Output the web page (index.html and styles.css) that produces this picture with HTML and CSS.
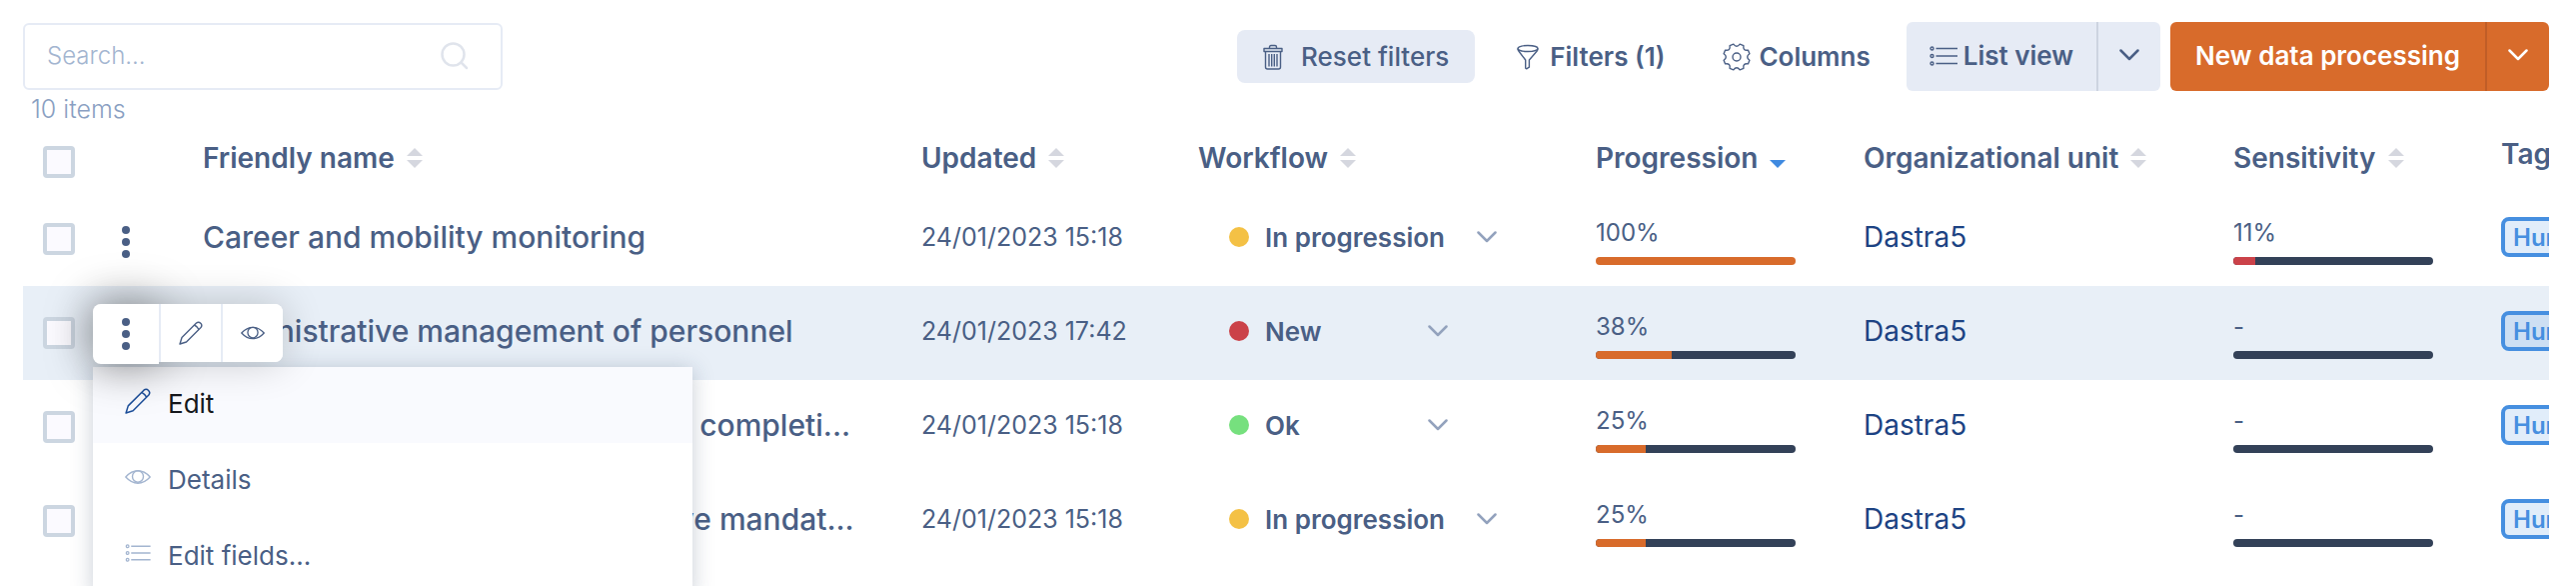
FILE: index.html
```html
<!DOCTYPE html>
<html lang="en">
<head>
<meta charset="utf-8">
<title>Data processing register</title>
<link rel="stylesheet" href="styles.css">
</head>
<body>
<svg class="sprite" aria-hidden="true">
  <symbol id="i-pencil" viewBox="0 0 24 24"><path d="M1 23L3 16.500L17.500 2A3.200 3.200 0 0 1 22 6.500L7.500 21zM15.500 4Q18.500 5.500 20 8.500"/></symbol>
  <symbol id="i-eye" viewBox="0 0 26 14"><path d="M.8 7Q6.500.8 13 .8T25.200 7Q19.500 13.200 13 13.200T.8 7z"/><ellipse cx="13" cy="6.500" rx="5.500" ry="5.700"/></symbol>
  <symbol id="i-list" viewBox="0 0 28 20"><circle cx="2.500" cy="2.500" r="1.500"/><circle cx="2.500" cy="10" r="1.500"/><circle cx="2.500" cy="17.500" r="1.500"/><path d="M6.500 2.500H28M6.500 10H28M6.500 17.500H28"/></symbol>
  <symbol id="i-chevron" viewBox="0 0 20 12"><path d="M1.500 1.500L10 10l8.500-8.500"/></symbol>
  <symbol id="i-sort" viewBox="0 0 16 20"><path d="M8 0l8 8H0zM8 20l8-8H0z"/></symbol>
  <symbol id="i-sort-down" viewBox="0 0 16 20"><path d="M8 20l8-8H0z"/></symbol>
  <symbol id="i-dots" viewBox="0 0 8 32"><circle cx="4" cy="4" r="4"/><circle cx="4" cy="16" r="4"/><circle cx="4" cy="28" r="4"/></symbol>
</svg>

<main class="page">
  <header class="toolbar">
    <label class="search">
      <input type="search" placeholder="Search..." aria-label="Search">
      <svg class="search-icon" viewBox="0 0 28 28"><circle cx="12.500" cy="12.500" r="11"/><path d="M20.500 20.500L26 26"/></svg>
    </label>
    <div class="actions">
      <button class="btn btn-reset">
        <svg class="icon" width="20" height="26" viewBox="0 0 20 26"><path d="M1 4.500h18v3H1zM6.500 4.500V3q0-1.500 1.500-1.500h4q1.500 0 1.500 1.500v1.500M2.500 7.500V23q0 2 2 2h11q2 0 2-2V7.500M6 10v12.500M8.700 10v12.500M11.300 10v12.500M14 10v12.500"/></svg>
        Reset filters
      </button>
      <button class="btn btn-filters">
        <svg class="icon" width="22" height="26" viewBox="0 0 22 26"><ellipse cx="11" cy="4.500" rx="10" ry="3"/><path d="M1 4.500q0 1.500 1 2.800L8.700 16v7.500q0 1.500 1.300 1.200l2.400-1.500V16L20 7.300q1-1.300 1-2.800"/></svg>
        Filters (1)
      </button>
      <button class="btn btn-columns">
        <svg class="icon" width="28" height="28" viewBox="0 0 28 28"><path d="M10.800 1.100Q14 5.500 17.200 1.100L20.900 2.600Q20 8 25.400 7.100L26.900 10.800Q22.500 14 26.900 17.200L25.400 20.900Q20 20 20.900 25.400L17.200 26.900Q14 22.500 10.800 26.900L7.100 25.400Q8 20 2.600 20.900L1.100 17.200Q5.500 14 1.100 10.800L2.600 7.100Q8 8 7.100 2.600z"/><circle cx="14" cy="14" r="4"/></svg>
        Columns
      </button>
      <div class="split split-light">
        <button class="split-main"><svg class="icon" width="28" height="20"><use href="#i-list"/></svg>List view</button>
        <button class="split-toggle" aria-label="Choose view"><svg class="chevron" width="20" height="12"><use href="#i-chevron"/></svg></button>
      </div>
      <div class="split split-primary">
        <button class="split-main">New data processing</button>
        <button class="split-toggle" aria-label="More creation options"><svg class="chevron" width="20" height="12"><use href="#i-chevron"/></svg></button>
      </div>
    </div>
  </header>

  <p class="count">10 items</p>

  <div class="table-wrap">
    <table class="grid">
      <colgroup>
        <col class="c-check"><col class="c-menu"><col class="c-name"><col class="c-updated"><col class="c-workflow"><col class="c-progress"><col class="c-unit"><col class="c-sens"><col class="c-tags">
      </colgroup>
      <thead>
        <tr>
          <th class="cell-check"><input type="checkbox" class="check" aria-label="Select all"></th>
          <th></th>
          <th><button class="sort">Friendly name<svg class="sort-icon" width="16" height="20"><use href="#i-sort"/></svg></button></th>
          <th><button class="sort">Updated<svg class="sort-icon" width="16" height="20"><use href="#i-sort"/></svg></button></th>
          <th><button class="sort">Workflow<svg class="sort-icon" width="16" height="20"><use href="#i-sort"/></svg></button></th>
          <th><button class="sort">Progression<svg class="sort-icon active" width="16" height="20"><use href="#i-sort-down"/></svg></button></th>
          <th><button class="sort">Organizational unit<svg class="sort-icon" width="16" height="20"><use href="#i-sort"/></svg></button></th>
          <th><button class="sort">Sensitivity<svg class="sort-icon" width="16" height="20"><use href="#i-sort"/></svg></button></th>
          <th class="th-plain">Tags</th>
        </tr>
      </thead>
      <tbody>
        <tr>
          <td class="cell-check"><input type="checkbox" class="check" aria-label="Select Career and mobility monitoring"></td>
          <td class="cell-menu"><button class="dots" aria-label="Row actions"><svg width="8" height="32"><use href="#i-dots"/></svg></button></td>
          <td class="cell-name">Career and mobility monitoring</td>
          <td class="cell-date">24/01/2023 15:18</td>
          <td><button class="state"><span class="dot yellow"></span><span class="state-label">In progression</span><svg class="chevron" width="20" height="12"><use href="#i-chevron"/></svg></button></td>
          <td class="cell-meter"><div class="value">100%</div><div class="meter"><div class="fill" style="width:100%"></div></div></td>
          <td><a class="unit" href="#">Dastra5</a></td>
          <td class="cell-meter"><div class="value">11%</div><div class="meter"><div class="fill danger" style="width:11%"></div></div></td>
          <td><span class="tag">Human resources</span></td>
        </tr>
        <tr class="hovered">
          <td class="cell-check"><input type="checkbox" class="check" aria-label="Select Administrative management of personnel"></td>
          <td class="cell-menu">
            <div class="quick">
              <button class="quick-btn quick-dots" aria-label="Row actions" aria-expanded="true"><svg width="8" height="32"><use href="#i-dots"/></svg></button>
              <button class="quick-btn" aria-label="Edit"><svg class="icon" width="24" height="24"><use href="#i-pencil"/></svg></button>
              <button class="quick-btn" aria-label="Details"><svg class="icon" width="24" height="14"><use href="#i-eye"/></svg></button>
            </div>
            <div class="menu" role="menu">
              <button class="menu-item current" role="menuitem"><svg class="icon" width="26" height="26"><use href="#i-pencil"/></svg>Edit</button>
              <button class="menu-item" role="menuitem"><svg class="icon" width="26" height="14"><use href="#i-eye"/></svg>Details</button>
              <button class="menu-item" role="menuitem"><svg class="icon" width="26" height="18"><use href="#i-list"/></svg>Edit fields...</button>
            </div>
          </td>
          <td class="cell-name">Administrative management of personnel</td>
          <td class="cell-date">24/01/2023 17:42</td>
          <td><button class="state"><span class="dot red"></span><span class="state-label">New</span><svg class="chevron" width="20" height="12"><use href="#i-chevron"/></svg></button></td>
          <td class="cell-meter"><div class="value">38%</div><div class="meter"><div class="fill" style="width:38%"></div></div></td>
          <td><a class="unit" href="#">Dastra5</a></td>
          <td class="cell-meter"><div class="value">-</div><div class="meter"></div></td>
          <td><span class="tag">Human resources</span></td>
        </tr>
        <tr>
          <td class="cell-check"><input type="checkbox" class="check" aria-label="Select row 3"></td>
          <td class="cell-menu"><button class="dots" aria-label="Row actions"><svg width="8" height="32"><use href="#i-dots"/></svg></button></td>
          <td class="cell-name">Management of training plans and completi...</td>
          <td class="cell-date">24/01/2023 15:18</td>
          <td><button class="state"><span class="dot green"></span><span class="state-label">Ok</span><svg class="chevron" width="20" height="12"><use href="#i-chevron"/></svg></button></td>
          <td class="cell-meter"><div class="value">25%</div><div class="meter"><div class="fill" style="width:25%"></div></div></td>
          <td><a class="unit" href="#">Dastra5</a></td>
          <td class="cell-meter"><div class="value">-</div><div class="meter"></div></td>
          <td><span class="tag">Human resources</span></td>
        </tr>
        <tr>
          <td class="cell-check"><input type="checkbox" class="check" aria-label="Select row 4"></td>
          <td class="cell-menu"><button class="dots" aria-label="Row actions"><svg width="8" height="32"><use href="#i-dots"/></svg></button></td>
          <td class="cell-name">Management of new representative mandat...</td>
          <td class="cell-date">24/01/2023 15:18</td>
          <td><button class="state"><span class="dot yellow"></span><span class="state-label">In progression</span><svg class="chevron" width="20" height="12"><use href="#i-chevron"/></svg></button></td>
          <td class="cell-meter"><div class="value">25%</div><div class="meter"><div class="fill" style="width:25%"></div></div></td>
          <td><a class="unit" href="#">Dastra5</a></td>
          <td class="cell-meter"><div class="value">-</div><div class="meter"></div></td>
          <td><span class="tag">Human resources</span></td>
        </tr>
      </tbody>
    </table>
  </div>
</main>
</body>
</html>
```
FILE: styles.css
```css
* { box-sizing: border-box; }

body {
  margin: 0;
  background: #fff;
  color: #4a5f85;
  font-family: Inter, "Open Sans", sans-serif;
  font-size: 24px;
}

button {
  border: 0;
  padding: 0;
  background: none;
  color: inherit;
  font: inherit;
  text-align: left;
  cursor: pointer;
}

svg { display: block; flex: none; }
.sprite { position: absolute; width: 0; height: 0; }

.icon { fill: none; stroke: currentColor; stroke-width: 1.400; stroke-linejoin: round; }
.chevron { fill: none; stroke: currentColor; stroke-width: 2.500; stroke-linecap: round; stroke-linejoin: round; }

.page { height: 100vh; padding: 22px 27px 0 23px; overflow: hidden; }

/* Toolbar */
.toolbar { display: flex; justify-content: space-between; align-items: center; }

.search {
  display: flex;
  align-items: center;
  width: 480px;
  height: 67px;
  padding: 0 32px 2px 22px;
  border: 2px solid #e6ebf5;
  border-radius: 6px;
}
.search input {
  flex: 1;
  min-width: 0;
  border: 0;
  padding: 0;
  outline: 0;
  background: none;
  color: inherit;
  font: 300 24px Inter, "Open Sans", sans-serif;
}
.search input::placeholder { color: #a3b5d0; opacity: 1; }
.search-icon { width: 28px; height: 28px; fill: none; stroke: #e0e4ec; stroke-width: 2.500; stroke-linecap: round; }

.actions { display: flex; align-items: center; font-size: 26px; }
.btn { display: flex; align-items: center; height: 53px; font-weight: 500; white-space: nowrap; }
.btn-reset { gap: 18px; padding: 0 26px; margin-right: 42px; border-radius: 8px; background: #e6ebf5; }
.btn-filters { gap: 11px; margin-right: 58px; font-weight: 600; }
.btn-columns { gap: 8px; margin-right: 36px; font-weight: 600; }

.split { display: flex; height: 69px; border-radius: 6px; font-weight: 600; white-space: nowrap; }
.split-main { display: flex; align-items: center; gap: 6px; padding: 0 23px 2px; }
.split-toggle { display: flex; align-items: center; justify-content: center; width: 64px; padding-bottom: 4px; border-left: 2px solid #cdd4e0; }
.split-light { margin-right: 10px; background: #e6ebf5; }
.split-primary { background: #d86b2b; color: #fff; }
.split-primary .split-main { padding: 0 25px 2px; }
.split-primary .split-toggle { border-color: #c05d27; }

.count { margin: 0; padding: 0 8px; line-height: 36px; font-size: 25px; font-weight: 300; color: #8a9fc2; }

/* Table */
.table-wrap { overflow-x: clip; }
.grid { table-layout: fixed; width: 100%; min-width: 2680px; border-collapse: collapse; }
.c-check { width: 80px; }
.c-menu { width: 100px; }
.c-name { width: 719px; }
.c-updated { width: 277px; }
.c-workflow { width: 398px; }
.c-progress { width: 268px; }
.c-unit { width: 370px; }
.c-sens { width: 268px; }

.grid th { height: 65px; padding: 0 0 4px; text-align: left; font-size: 28px; font-weight: 600; white-space: nowrap; }
.grid td { height: 94px; padding: 0 0 4px; white-space: nowrap; }
.grid .th-plain { padding-bottom: 12px; }
.grid .cell-check { padding: 0 0 0 20px; }
.grid th.cell-check { padding-top: 4px; }
.hovered { background: #e8eff7; }

.check {
  appearance: none;
  display: block;
  width: 32px;
  height: 32px;
  margin: 0;
  border: 4px solid #ccd6e1;
  border-radius: 4px;
  background: #fbfaff;
}

.sort { display: flex; align-items: center; gap: 12px; }
.sort-icon { fill: #d5d7df; }
.sort-icon.active { fill: #3f8ae0; }

.grid .cell-menu { position: relative; padding: 6px 0 0 19px; }
.dots { display: block; fill: currentColor; }

.cell-name { font-size: 30px; font-weight: 500; }
.cell-date { font-size: 25px; }

.state { display: flex; align-items: center; margin-left: 31px; font-size: 26px; font-weight: 600; }
.dot { width: 20px; height: 20px; margin-right: 16px; border-radius: 50%; }
.yellow { background: #f4c145; }
.red { background: #cb4249; }
.green { background: #76e07e; }
.state-label { min-width: 131px; margin-right: 32px; }
.state .chevron { color: #93a2bd; }

.grid .cell-meter { padding: 4px 0 0; }
.value { line-height: 32px; }
.meter { width: 200px; height: 8px; margin-top: 8px; border-radius: 4px; background: #334158; overflow: hidden; }
.fill { height: 100%; background: #d86b2b; }
.fill.danger { background: #cb4249; }

.unit { color: #1d4383; font-size: 28px; text-decoration: none; }

.tag {
  display: inline-flex;
  align-items: center;
  height: 40px;
  padding: 0 8px;
  border: 4px solid #468fe0;
  border-radius: 8px;
  background: rgba(70, 143, 224, 0.16);
  color: #468fe0;
  font-size: 24px;
  font-weight: 600;
}

/* Row quick actions and menu */
.quick {
  position: absolute;
  z-index: 2;
  top: 18px;
  left: -10px;
  display: flex;
  height: 58px;
  border-radius: 8px;
  background: #fff;
  box-shadow: 0 0 40px rgba(0, 0, 0, 0.2);
}
.quick-btn { position: relative; display: flex; align-items: center; justify-content: center; width: 62px; background: #fff; border-left: 2px solid #e6ebf5; }
.quick-btn:last-child { border-radius: 0 8px 8px 0; }
.quick .quick-dots { width: 66px; height: 60px; border: 0; border-radius: 8px 0 0 8px; fill: currentColor; box-shadow: 0 0 48px rgba(0, 0, 0, 0.4); }

.menu {
  position: absolute;
  z-index: 1;
  top: 81px;
  left: -10px;
  width: 600px;
  background: #fff;
  box-shadow: 0 2px 20px rgba(40, 60, 90, 0.25);
}
.menu-item { display: flex; align-items: center; gap: 17px; width: 100%; height: 76px; padding: 0 32px 4px; font-size: 26px; }
.menu-item .icon { margin-bottom: 4px; color: #a3b5d0; }
.menu-item.current { background: #f9fafe; color: #16181d; }
.menu-item.current .icon { color: #1d4f9a; }
```
